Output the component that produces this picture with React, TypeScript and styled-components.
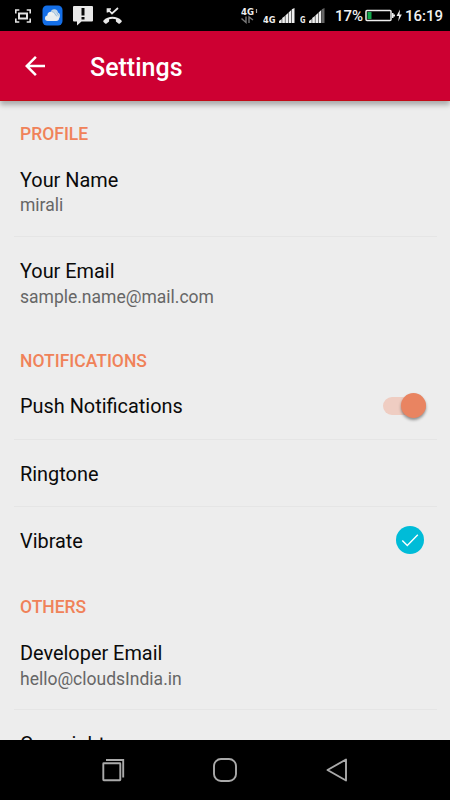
import React from "react";
import styled, { createGlobalStyle } from "styled-components";

const GlobalStyle = createGlobalStyle`
  * { box-sizing: border-box; }
  body { margin: 0; background: #000; font-family: Roboto, "Noto Sans", sans-serif; }
`;

const Screen = styled.div`
  width: 450px;
  height: 800px;
  display: flex;
  flex-direction: column;
  overflow: hidden;
  background: #000;
`;

const StatusBar = styled.div`
  height: 31px;
  flex: none;
  display: flex;
  justify-content: space-between;
  padding: 0 8px 0 14px;
  color: #f2f2f2;
`;

const StatusGroup = styled.div`
  display: flex;
  align-items: center;
  height: 31px;
`;

const StatusIcon = styled.svg<{ $gap?: number }>`
  display: block;
  flex: none;
  margin-left: ${(p) => p.$gap ?? 0}px;
`;

const NetworkLabel = styled.text`
  font-family: "DejaVu Sans", sans-serif;
  font-size: 9px;
  font-weight: 700;
  fill: #eee;
`;

const StatusText = styled.span<{ $width: number; $gap?: number }>`
  width: ${(p) => p.$width}px;
  margin-left: ${(p) => p.$gap ?? 0}px;
  font-size: 15px;
  font-weight: 500;
  line-height: 31px;
  padding-top: 2px;
  white-space: nowrap;
`;

const AppBar = styled.header`
  height: 70px;
  flex: none;
  display: flex;
  align-items: center;
  padding-left: 20px;
  background: #cd0032;
  border-bottom: 1px solid #c20b18;
  box-shadow: 0 4px 5px rgba(0, 0, 0, 0.28);
  z-index: 1;
`;

const BackButton = styled.button`
  display: flex;
  width: 30px;
  height: 30px;
  padding: 0;
  border: 0;
  background: none;
`;

const Title = styled.h1`
  margin: 4px 0 0 40px;
  font-size: 25px;
  line-height: 32px;
  font-weight: 500;
  color: #fff;
`;

const Content = styled.main`
  flex: 1;
  min-height: 0;
  overflow: hidden;
  padding: 0 13px 0 14px;
  background: #ededed;
`;

const SectionLabel = styled.h2`
  height: 53px;
  margin: 0;
  padding: 21px 6px 0;
  font-size: 17.5px;
  line-height: 24px;
  font-weight: 500;
  color: #f08259;
`;

const Row = styled.div<{ $height: number; $top: number; $divided?: boolean }>`
  display: flex;
  justify-content: space-between;
  height: ${(p) => p.$height}px;
  padding: ${(p) => p.$top}px 10px 0 6px;
  border-bottom: ${(p) => (p.$divided ? "1px solid #e5e5e5" : "0")};
`;

const RowTitle = styled.div`
  font-size: 19.9px;
  line-height: 25px;
  color: #0a0a0a;
`;

const RowValue = styled.div<{ $gap: number }>`
  margin-top: ${(p) => p.$gap}px;
  font-size: 17.5px;
  line-height: 22px;
  color: #666;
`;

const Switch = styled.div`
  display: flex;
  align-items: center;
  justify-content: flex-end;
  width: 43px;
  height: 18px;
  margin: 2.5px 1px 0 0;
  border-radius: 9px;
  background: #efcdc2;
`;

const Thumb = styled.div`
  width: 25.5px;
  height: 25.5px;
  flex: none;
  border-radius: 50%;
  background: #e98461;
  box-shadow: 0 2px 3px rgba(0, 0, 0, 0.4);
`;

const Check = styled.div`
  display: flex;
  width: 28px;
  height: 28px;
  margin: -3px 3px 0 0;
  border-radius: 50%;
  background: #00bcd8;
`;

const NavBar = styled.nav`
  height: 60px;
  flex: none;
  display: flex;
  align-items: center;
  justify-content: space-between;
  padding: 0 98px;
  background: #000;
`;

const NavIcon = styled.svg`
  width: 30px;
  height: 30px;
  fill: none;
  stroke: #aaa;
  stroke-width: 1.9;
`;

interface EntryProps {
  title: string;
  value?: string;
  valueGap?: number;
  height: number;
  top: number;
  divided?: boolean;
  children?: React.ReactNode;
}

function Entry({ title, value, valueGap = 2, height, top, divided, children }: EntryProps) {
  return (
    <Row $height={height} $top={top} $divided={divided}>
      <div>
        <RowTitle>{title}</RowTitle>
        {value && <RowValue $gap={valueGap}>{value}</RowValue>}
      </div>
      {children}
    </Row>
  );
}

function SignalBars({ faded }: { faded?: boolean }) {
  return (
    <StatusIcon $gap={3} width="16" height="31" viewBox="0 0 16 31" fill="#eee">
      <path d="M0 23v-2l2.700-2V23z" />
      <path d="M3.200 23v-5l2.700-2V23z" />
      <path d="M6.400 23v-7.500l2.700-2.500V23z" />
      <path d="M9.600 23V12.500l2.700-2.500V23z" />
      <path d="M12.800 23V9.300L15.500 8v15z" fill={faded ? "#666" : "#eee"} />
    </StatusIcon>
  );
}

export default function App() {
  return (
    <>
      <GlobalStyle />
      <Screen>
        <StatusBar>
          <StatusGroup>
            <StatusIcon width="18" height="31" viewBox="0 0 18 31" fill="none" stroke="#e4e4e4" strokeWidth="1.6">
              <path d="M1.800 13.500V10h3.500M12.700 10h3.500v3.500M1.800 18.500V22h3.500M12.700 22h3.500v-3.500" />
              <rect x="5" y="13.500" width="8" height="5" strokeWidth="2" />
            </StatusIcon>
            <StatusIcon $gap={10} width="21" height="31" viewBox="0 0 21 31">
              <rect x="0.500" y="5.500" width="20" height="20" rx="4.500" fill="#146fe8" />
              <circle cx="12.300" cy="12.800" r="3.600" fill="#c3d8e6" />
              <circle cx="14.500" cy="15.800" r="3.500" fill="#d0dfe8" />
              <path d="M14.800 12.500l1.600 3" stroke="#83aeda" strokeWidth="0.800" />
              <circle cx="9" cy="15.300" r="3.600" fill="#eef1f0" />
              <rect x="3" y="15.500" width="14" height="5.500" rx="2.750" fill="#e8edef" />
              <path d="M9.500 11.500c3 .3 3.800 3 5.500 5" fill="none" stroke="#8db5dc" strokeWidth="0.800" />
            </StatusIcon>
            <StatusIcon $gap={10} width="20" height="31" viewBox="0 0 20 31">
              <path d="M1 6h18a1 1 0 0 1 1 1v13.500a1 1 0 0 1-1 1H8.500L4 25.500v-4H1a1 1 0 0 1-1-1V7a1 1 0 0 1 1-1z" fill="#e8e8e8" />
              <path d="M8.500 8h3v7.500h-3zM8.500 17h3v2.500h-3z" fill="#080808" />
            </StatusIcon>
            <StatusIcon $gap={10} width="19" height="31" viewBox="0 0 19 31">
              <path d="M4.500 12.500V9H8M5 9.300l4 4.200L15 8" fill="none" stroke="#e8e8e8" strokeWidth="1.700" />
              <path d="M0.500 20.500C5 15.500 14 15.500 18.500 20.500c.5.600.400 1 0 1.400l-1.600 1.600c-.5.500-1 .4-1.500 0l-2.500-2v-2.200c-2.200-.7-4.600-.7-6.800 0v2.200l-2.500 2c-.5.400-1 .5-1.500 0L.5 21.900c-.4-.4-.4-.8 0-1.400z" fill="#e8e8e8" />
            </StatusIcon>
          </StatusGroup>
          <StatusGroup>
            <StatusIcon width="18" height="31" viewBox="0 0 18 31">
              <NetworkLabel x="0" y="14.500" textLength="13" lengthAdjust="spacingAndGlyphs">4G</NetworkLabel>
              <path d="M15.500 9v4" stroke="#aaa" strokeWidth="1.200" />
              <path d="M0.500 18.500l4.500 4v-6M12 20L8 17v6" fill="none" stroke="#777" strokeWidth="1.400" />
            </StatusIcon>
            <StatusIcon $gap={4} width="13" height="31" viewBox="0 0 13 31">
              <NetworkLabel x="0" y="22.700" textLength="12.500" lengthAdjust="spacingAndGlyphs">4G</NetworkLabel>
            </StatusIcon>
            <SignalBars />
            <StatusIcon $gap={5} width="6" height="31" viewBox="0 0 6 31">
              <NetworkLabel x="0" y="22.700" textLength="5.500" lengthAdjust="spacingAndGlyphs">G</NetworkLabel>
            </StatusIcon>
            <SignalBars faded />
            <StatusText $width={28} $gap={10}>17%</StatusText>
            <StatusIcon $gap={2} width="30" height="31" viewBox="0 0 30 31">
              <rect x="1" y="10.500" width="25" height="10" rx="1" fill="none" stroke="#eee" strokeWidth="1.500" />
              <rect x="2.500" y="12" width="4" height="7" fill="#13a84b" />
              <path d="M27 13h1.500v1.500H30v2h-1.500V18H27z" fill="#eee" />
            </StatusIcon>
            <StatusIcon $gap={1} width="6" height="31" viewBox="0 0 6 31">
              <path d="M4 9.500L0.500 16H3l-.8 5.500L5.800 14.500H3.500z" fill="#eee" />
            </StatusIcon>
            <StatusText $width={37} $gap={3}>16:19</StatusText>
          </StatusGroup>
        </StatusBar>

        <AppBar>
          <BackButton aria-label="Back">
            <svg width="30" height="30" viewBox="0 0 24 24" fill="#fff">
              <path d="M20 11H7.830l5.590-5.590L12 4l-8 8 8 8 1.410-1.410L7.830 13H20v-2z" />
            </svg>
          </BackButton>
          <Title>Settings</Title>
        </AppBar>

        <Content>
          <SectionLabel>PROFILE</SectionLabel>
          <Entry title="Your Name" value="mirali" valueGap={1} height={83} top={14} divided />
          <Entry title="Your Email" value="sample.name@mail.com" height={91} top={22} />

          <SectionLabel>NOTIFICATIONS</SectionLabel>
          <Entry title="Push Notifications" height={59} top={13} divided>
            <Switch><Thumb /></Switch>
          </Entry>
          <Entry title="Ringtone" height={67} top={22} divided />
          <Entry title="Vibrate" height={67} top={22}>
            <Check>
              <svg width="28" height="28" viewBox="0 0 28 28" fill="none" stroke="#fff" strokeWidth="1.400">
                <path d="M6.300 14.500l5 5L21.800 8.800" />
              </svg>
            </Check>
          </Entry>

          <SectionLabel>OTHERS</SectionLabel>
          <Entry title="Developer Email" value="hello@cloudsIndia.in" height={83} top={14} divided />
          <Entry title="Copyright" height={67} top={22} />
        </Content>

        <NavBar>
          <NavIcon viewBox="0 0 30 30">
            <rect x="5.300" y="8.300" width="17" height="17" rx="0.500" />
            <path d="M8 5h17.200v17.500" />
          </NavIcon>
          <NavIcon viewBox="0 0 30 30">
            <rect x="4" y="4" width="22" height="22" rx="7" />
          </NavIcon>
          <NavIcon viewBox="0 0 30 30">
            <path d="M24 4.500v21L5.500 15z" strokeLinejoin="round" />
          </NavIcon>
        </NavBar>
      </Screen>
    </>
  );
}
